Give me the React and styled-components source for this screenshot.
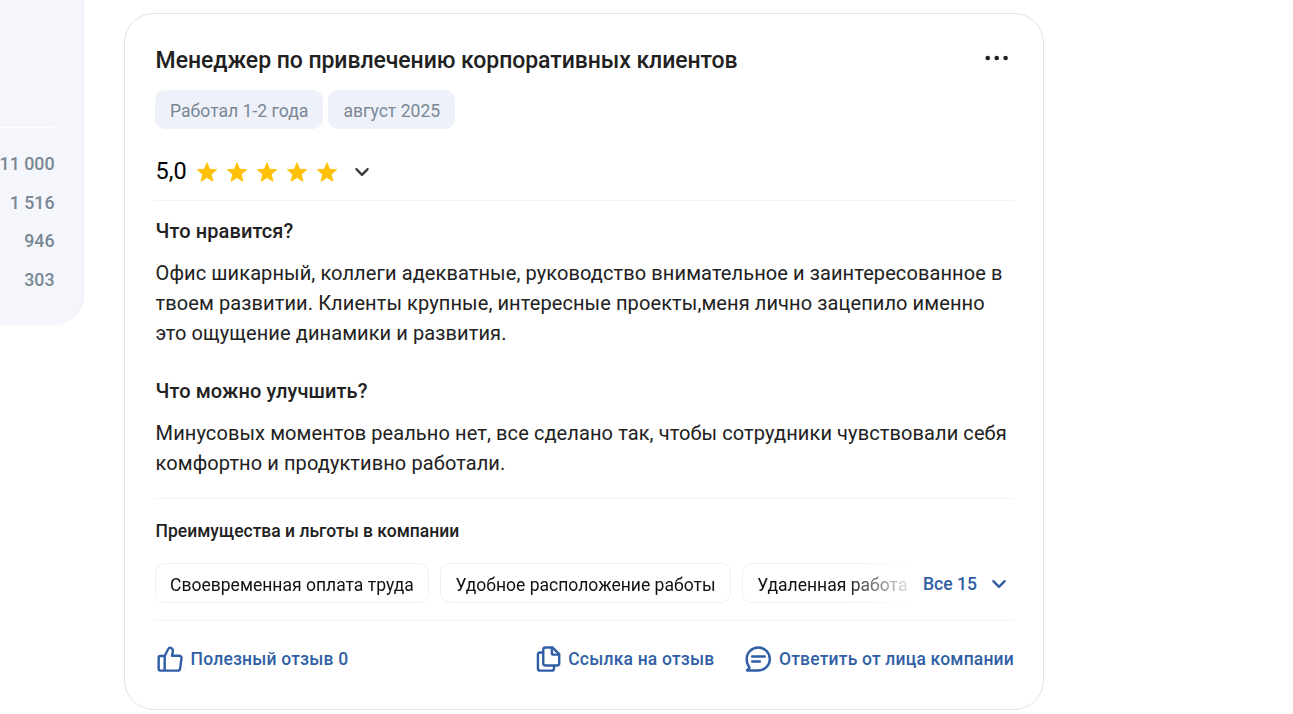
import React from 'react';
import styled, { createGlobalStyle } from 'styled-components';

const GlobalStyle = createGlobalStyle`
  * {
    box-sizing: border-box;
  }

  body {
    margin: 0;
    background: #fff;
    color: #212121;
    font-family: Roboto, "Liberation Sans", sans-serif;
    overflow: hidden;
  }

  h2, h3, h4, p {
    margin: 0;
    padding-left: 0.6px;
    font-weight: 500;
  }
`;

const Page = styled("div")`
  display: flex;
  align-items: flex-start;
  height: 714px;
`;

const Sidebar = styled("aside")`
  width: 84px;
  height: 325px;
  margin-right: 40px;
  padding: 127px 29px 0 0;
  background: #f4f6fb;
  border-right: 1px solid #e9ecf4;
  border-radius: 0 0 30px 0;
`;

const Counters = styled("div")`
  display: flex;
  flex-direction: column;
  align-items: flex-end;
  padding-top: 17px;
  border-top: 1px solid #fff;
`;

const Counter = styled("span")`
  margin-right: -0.5px;
  color: #7a8794;
  font-size: 17.8px;
  font-weight: 500;
  line-height: 38.6px;
  white-space: nowrap;
`;

const Card = styled("article")`
  width: 920px;
  height: 697px;
  margin-top: 13px;
  padding: 30px;
  border: 1px solid #dfe3ec;
  border-radius: 30px;
`;

const Header = styled("div")`
  display: flex;
  justify-content: space-between;
  align-items: flex-start;
  height: 32px;
`;

const Title = styled("h2")`
  font-size: 23px;
  line-height: 33px;
  letter-spacing: -0.06px;
`;

const IconButton = styled("button")`
  display: flex;
  padding: 0;
  border: none;
  background: transparent;
  color: ${(props) => props.$color || '#212121'};
`;

const MenuButton = styled(IconButton)`
  margin: 11px 4px 0 0;
`;

const Tags = styled("div")`
  display: flex;
  gap: 5px;
  margin-top: 14px;
`;

const Tag = styled("span")`
  height: 39px;
  padding: 0 15px;
  border-radius: 10px;
  background: #eef1f9;
  color: #7a8794;
  font-size: 17.6px;
  line-height: 42px;
`;

const Rating = styled("div")`
  display: flex;
  align-items: center;
  height: 32px;
  margin-top: 27px;
`;

const Score = styled("span")`
  width: 41px;
  padding: 0 0 2px 0.6px;
  color: #000;
  font-size: 23.5px;
  line-height: 28px;
`;

const Stars = styled("div")`
  display: flex;
  gap: 8px;
  margin-right: 16px;
`;

const Divider = styled("div")`
  height: 1px;
  margin-top: ${(props) => props.$top}px;
  background: #f2f4f9;
`;

const Question = styled("h3")`
  margin-top: ${(props) => props.$top}px;
  font-size: 20px;
  line-height: 30px;
  letter-spacing: 0.1px;
`;

const Answer = styled("p")`
  margin-top: 12px;
  font-size: 20px;
  font-weight: 400;
  line-height: 30px;
  letter-spacing: 0.095px;
  white-space: nowrap;
`;

const BenefitsTitle = styled("h4")`
  margin-top: 20px;
  font-size: 17.5px;
  line-height: 24px;
`;

const Benefits = styled("div")`
  display: flex;
  justify-content: space-between;
  height: 40px;
  margin-top: 20px;
`;

const BenefitList = styled("div")`
  display: flex;
  gap: 11.6px;
  width: 754px;
  overflow: hidden;
  mask-image: linear-gradient(to right, #000 690px, transparent 762px);
`;

const Benefit = styled("span")`
  flex: none;
  padding: 0 14px;
  border: 1px solid #eef0f8;
  border-radius: 10px;
  color: #111;
  font-size: 17.55px;
  line-height: 42px;
`;

const AllButton = styled("button")`
  display: flex;
  align-items: center;
  gap: 14px;
  padding: 2px 6px 0 0;
  border: none;
  background: transparent;
  color: #315fa5;
  font-family: inherit;
  font-size: 17.6px;
  font-weight: 500;
`;

const Footer = styled("div")`
  display: flex;
  align-items: center;
  height: 30px;
  margin-top: 23px;
`;

const Action = styled("button")`
  display: flex;
  align-items: center;
  gap: 5.6px;
  padding: 0;
  border: none;
  background: transparent;
  color: #315fa5;
  font-family: inherit;
  font-size: 17.5px;
  font-weight: 500;
  letter-spacing: 0.19px;
  white-space: nowrap;

  &:first-child {
    margin-right: auto;
  }

  &:last-child {
    margin: 0 -1px 0 29px;
  }
`;

const Dots = () => (
  <svg width="24" height="6" viewBox="0 0 24 6" fill="currentColor">
    <circle cx="2.7" cy="3" r="2.3" />
    <circle cx="11.7" cy="3" r="2.3" />
    <circle cx="20.6" cy="3" r="2.3" />
  </svg>
);

const Star = () => (
  <svg width="22" height="22" viewBox="0 0 22 22" fill="#ffc107" stroke="#ffc107" strokeWidth="1" strokeLinejoin="round">
    <path d="M11 1.8 13.5 8.2 20.6 8.7 15.2 13.2 16.9 20.2 11 16.5 5.1 20.2 6.8 13.2 1.4 8.7 8.5 8.2Z" />
  </svg>
);

const Chevron = () => (
  <svg width="16" height="16" viewBox="0 0 16 16" fill="none" stroke="currentColor" strokeWidth="2.4" strokeLinecap="round" strokeLinejoin="round">
    <path d="M2.4 5.2 8 10.8l5.6-5.6" />
  </svg>
);

const iconProps = {
  width: 30,
  height: 30,
  viewBox: '-0.5 -0.5 31 31',
  fill: 'none',
  stroke: 'currentColor',
  strokeWidth: 2.5,
  strokeLinecap: 'round',
  strokeLinejoin: 'round',
};

const Like = () => (
  <svg {...iconProps}>
    <path d="M9.5 12.2V27M4.9 11.9h4.6L13.3 4.4c1-2.1 4.7-1.1 4.7 2.1 0 1.8-.7 3.4-1 5.1h7.5c1.5 0 2.6 1.2 2.4 2.6l-1.4 10.4c-.2 1.5-1.1 2.4-2.5 2.4H4.9c-.9 0-1.6-.7-1.6-1.6V13.5c0-.9.7-1.6 1.6-1.6Z" />
  </svg>
);

const Copy = () => (
  <svg {...iconProps}>
    <path d="M12.4 3.2h7.4l6.8 6.8v9.5c0 1.4-.9 2.3-2.3 2.3H12.4c-1.4 0-2.3-.9-2.3-2.3v-14c0-1.4.9-2.3 2.3-2.3Z" />
    <path d="M19 3.5V9c0 .9.6 1.5 1.5 1.5h5.8M9.8 8.2H6.9c-1.4 0-2.3.9-2.3 2.3v14.2c0 1.4.9 2.3 2.3 2.3h12c1.4 0 2.3-.9 2.3-2.3v-2.6" />
  </svg>
);

const Reply = () => (
  <svg {...iconProps}>
    <path d="M3.7 26.8 6.3 24C4.3 21.7 3.3 18.5 3.3 15.1 3.3 8.3 8.7 3.2 15.3 3.2S27.2 8.3 27.2 15s-5.3 11.8-11.9 11.8Z" />
    <path d="M9 12.5h13M9 17.6h8" />
  </svg>
);

const counters = ['11 000', '1 516', '946', '303'];
const tags = ['Работал 1-2 года', 'август 2025'];
const benefits = ['Своевременная оплата труда', 'Удобное расположение работы', 'Удаленная работа'];

const App = () => {
  return (
    <>
      <GlobalStyle />
      <Page>
        <Sidebar>
          <Counters>
            {counters.map((value) => <Counter key={value}>{value}</Counter>)}
          </Counters>
        </Sidebar>

        <Card>
          <Header>
            <Title>Менеджер по привлечению корпоративных клиентов</Title>
            <MenuButton><Dots /></MenuButton>
          </Header>

          <Tags>
            {tags.map((tag) => <Tag key={tag}>{tag}</Tag>)}
          </Tags>

          <Rating>
            <Score>5,0</Score>
            <Stars>
              {[1, 2, 3, 4, 5].map((n) => <Star key={n} />)}
            </Stars>
            <IconButton $color="#3c3c3c"><Chevron /></IconButton>
          </Rating>
          <Divider $top={12} />

          <Question $top={15}>Что нравится?</Question>
          <Answer>
            Офис шикарный, коллеги адекватные, руководство внимательное и заинтересованное в<br />
            твоем развитии. Клиенты крупные, интересные проекты,меня лично зацепило именно<br />
            это ощущение динамики и развития.
          </Answer>

          <Question $top={28}>Что можно улучшить?</Question>
          <Answer>
            Минусовых моментов реально нет, все сделано так, чтобы сотрудники чувствовали себя<br />
            комфортно и продуктивно работали.
          </Answer>
          <Divider $top={20} />

          <BenefitsTitle>Преимущества и льготы в компании</BenefitsTitle>
          <Benefits>
            <BenefitList>
              {benefits.map((item) => <Benefit key={item}>{item}</Benefit>)}
            </BenefitList>
            <AllButton>Все 15 <Chevron /></AllButton>
          </Benefits>
          <Divider $top={17} />

          <Footer>
            <Action><Like />Полезный отзыв 0</Action>
            <Action><Copy />Ссылка на отзыв</Action>
            <Action><Reply />Ответить от лица компании</Action>
          </Footer>
        </Card>
      </Page>
    </>
  );
};

export default App;
